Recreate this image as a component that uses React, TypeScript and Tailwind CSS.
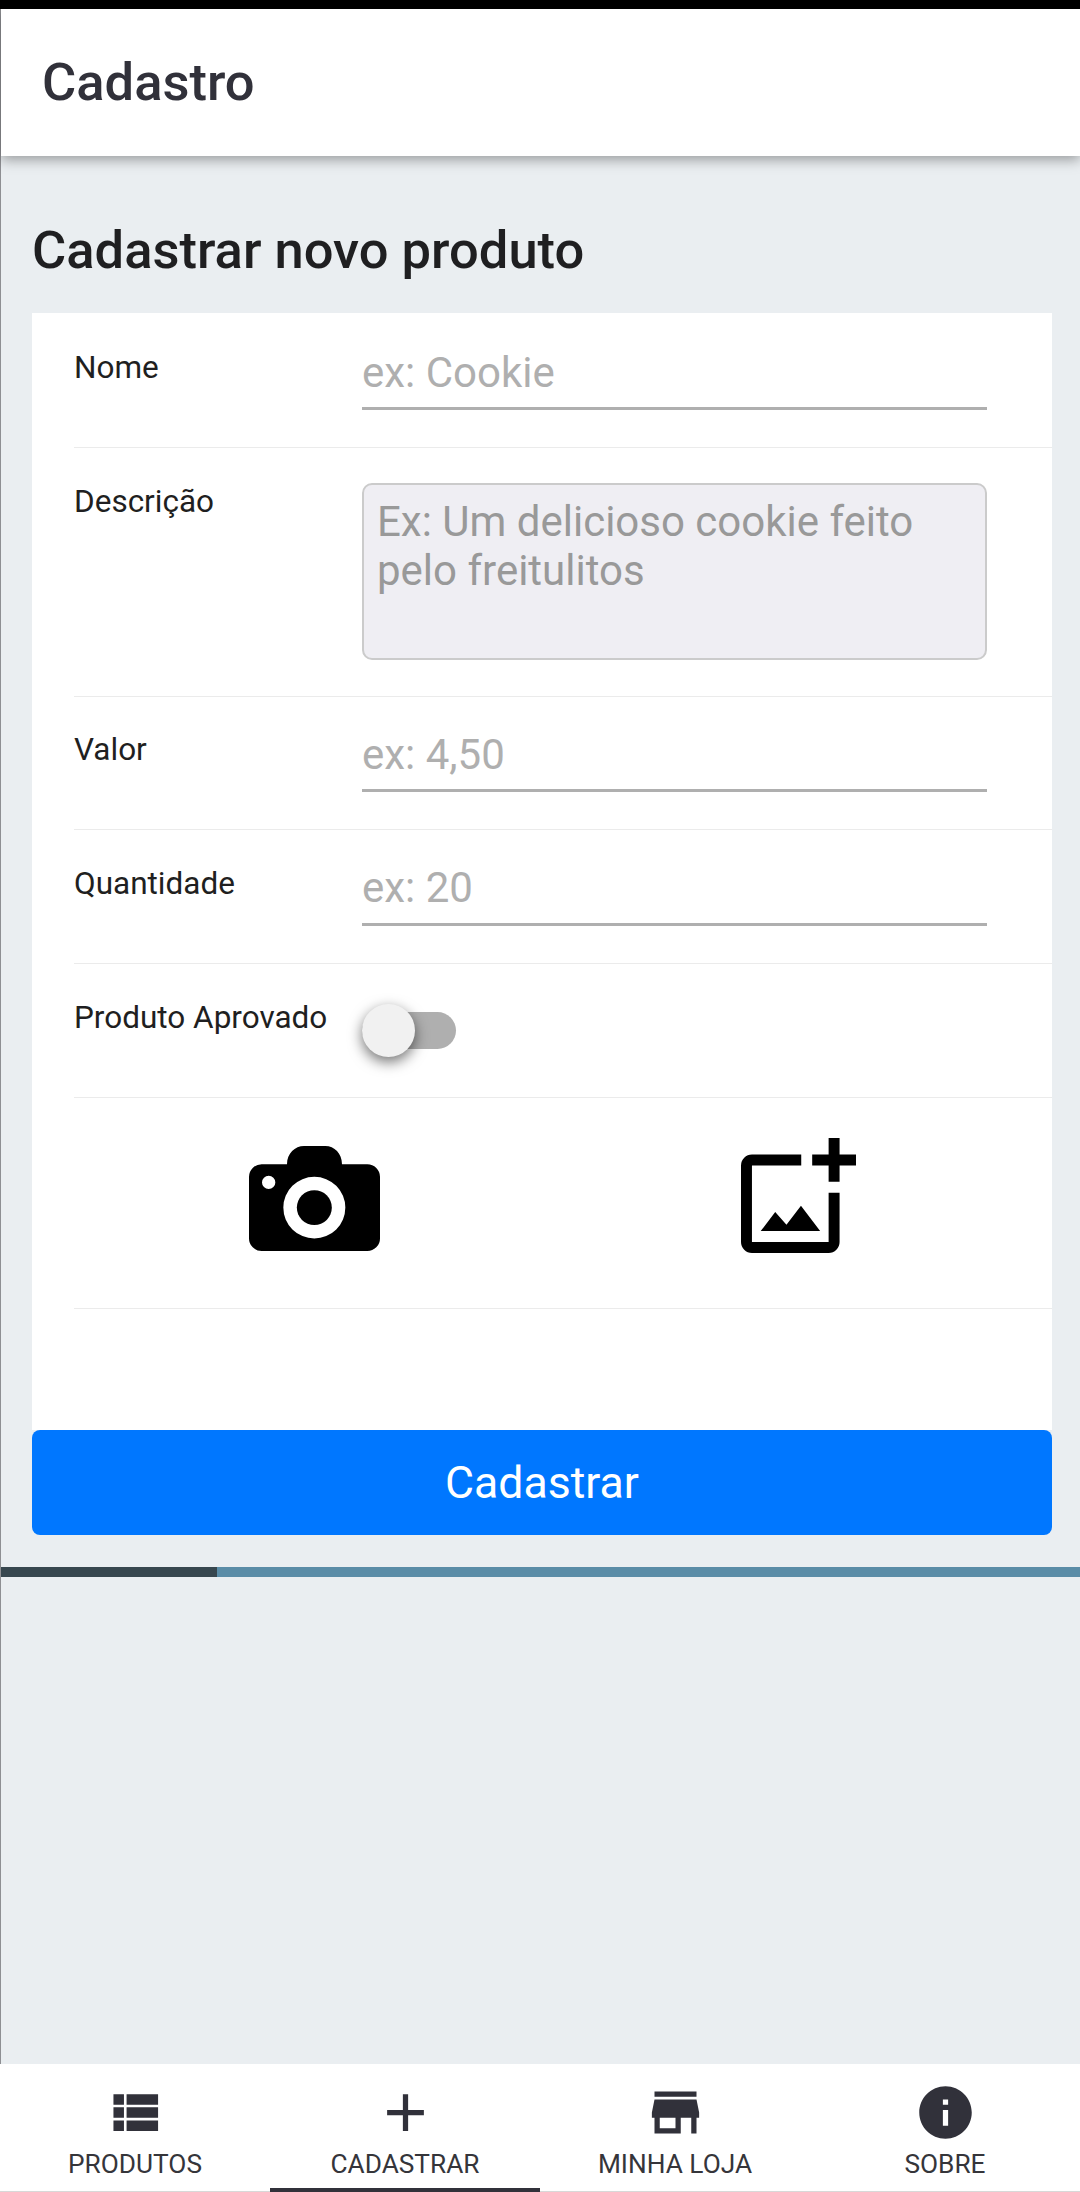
import type { ReactNode } from "react";
import { MdAdd, MdInfo, MdStore } from "react-icons/md";

function Row({ label, className, children }: { label: string; className: string; children: ReactNode }) {
  return (
    <div className={`ml-[42px] flex items-start border-b border-[#ebebeb] ${className}`}>
      <div className="w-[288px] shrink-0 whitespace-nowrap text-[31.5px] leading-[36px] text-[#1f1f21]">{label}</div>
      {children}
    </div>
  );
}

function LineInput({ placeholder, className }: { placeholder: string; className: string }) {
  return (
    <input
      placeholder={placeholder}
      className={`block w-[625px] rounded-none border-b-3 border-[#afafaf] bg-transparent text-[42px] placeholder:text-[#afafaf] placeholder:opacity-100 outline-none ${className}`}
    />
  );
}

function CameraIcon() {
  return (
    <svg width="131" height="105" viewBox="0 0 393 317" preserveAspectRatio="none">
      <path
        fillRule="evenodd"
        d="M38 55H114C114 22 138 0 165 0H229C256 0 279 22 279 55H355A38 38 0 0 1 393 93V279A38 38 0 0 1 355 317H38A38 38 0 0 1 0 279V93A38 38 0 0 1 38 55ZM196 93A93 93 0 1 0 196 279A93 93 0 1 0 196 93ZM59 90A20 20 0 1 0 59 130A20 20 0 1 0 59 90Z"
      />
      <circle cx="196" cy="186" r="52.5" />
    </svg>
  );
}

function AddImageIcon() {
  return (
    <svg width="115" height="115" viewBox="0 0 21 21">
      <path d="M16 10H18V19A2 2 0 0 1 16 21H2A2 2 0 0 1 0 19V5A2 2 0 0 1 2 3H11V5H2V19H16ZM16 0H18V3H21V5H18V8H16V5H13V3H16ZM3.6 17L6.25 13.5L8.3 15.85L10.95 12.35L14.45 17Z" />
    </svg>
  );
}

function ListIcon() {
  return (
    <svg width="63" height="63" viewBox="0.4 0 24 24" fill="currentColor">
      <path d="M4 14h4v-4H4v4zm0 5h4v-4H4v4zM4 9h4V5H4v4zm5 5h12v-4H9v4zm0 5h12v-4H9v4zM9 5v4h12V5H9z" />
    </svg>
  );
}

function Tab({ label, active, children }: { label: string; active?: boolean; children: ReactNode }) {
  return (
    <button
      className={`flex flex-1 flex-col items-center pt-[17px] text-[#31313a] ${
        active ? "border-b-4 border-[#31313a]" : "border-b border-[#d8d8d8]"
      }`}
    >
      {children}
      <span className="text-[26.25px] leading-[40px] text-[#35353a]">{label}</span>
    </button>
  );
}

export default function App() {
  return (
    <div className="flex h-[2192px] w-[1080px] flex-col overflow-hidden bg-[#eaeef1] font-['Roboto',sans-serif]">
      <div className="h-[9px] shrink-0 bg-black" />
      <div className="flex flex-1 flex-col border-l border-[#8e8f93]">
        <header className="flex h-[147px] items-center bg-white pb-[2px] pl-[41px] shadow-[0_4px_12px_rgba(0,0,0,0.34)]">
          <h1 className="text-[52.5px] leading-[62px] font-medium text-[#31313a]">Cadastro</h1>
        </header>
        <main className="flex flex-col pr-[28px] pl-[31px]">
          <h2 className="flex h-[157px] items-center pt-[31px] text-[52.5px] leading-[62px] font-medium text-[#1f1f21]">
            Cadastrar novo produto
          </h2>
          <form className="flex flex-col">
            <div className="h-[1117px] bg-white pt-px">
              <Row label="Nome" className="h-[134px] *:first:mt-[36px]">
                <LineInput placeholder="ex: Cookie" className="mt-[22px] h-[74px] pt-[2px]" />
              </Row>
              <Row label="Descrição" className="h-[249px] *:first:mt-[36px]">
                <textarea
                  placeholder="Ex: Um delicioso cookie feito pelo freitulitos"
                  className="mt-[35px] block h-[177px] w-[625px] resize-none overflow-hidden rounded-[10px] border-2 border-[#cbcbcb] bg-[#efeef3] px-[13px] py-[12px] text-[42px] leading-[49px] placeholder:text-[#999999] placeholder:opacity-100 outline-none"
                />
              </Row>
              <Row label="Valor" className="h-[133px] *:first:mt-[35px]">
                <LineInput placeholder="ex: 4,50" className="mt-[21px] h-[74px] pt-[2px]" />
              </Row>
              <Row label="Quantidade" className="h-[134px] *:first:mt-[36px]">
                <LineInput placeholder="ex: 20" className="mt-[21px] h-[75px] pt-px" />
              </Row>
              <Row label="Produto Aprovado" className="h-[134px] *:first:mt-[36px]">
                <button type="button" className="mt-[48px] flex h-[37px] w-[94px] items-center rounded-full bg-[#afafaf]">
                  <span className="h-[53px] w-[53px] rounded-full bg-[#f1f1f1] shadow-[0_5px_14px_rgba(0,0,0,0.55)]" />
                </button>
              </Row>
              <div className="ml-[42px] flex h-[211px] items-start border-b border-[#ebebeb]">
                <button type="button" className="ml-[175px] pt-[48px]">
                  <CameraIcon />
                </button>
                <button type="button" className="ml-[361px] pt-[40px]">
                  <AddImageIcon />
                </button>
              </div>
            </div>
            <button type="button" className="h-[105px] rounded-[8px] bg-[#0077ff] text-[44.6px] leading-[107px] text-white">
              Cadastrar
            </button>
          </form>
        </main>
        <div className="mt-[32px] flex h-[10px] bg-[#5a8ca7]">
          <div className="w-1/5 bg-[#37474f]" />
        </div>
      </div>
      <nav className="flex h-[128px] shrink-0 bg-white">
        <Tab label="PRODUTOS">
          <ListIcon />
        </Tab>
        <Tab label="CADASTRAR" active>
          <MdAdd size={63} />
        </Tab>
        <Tab label="MINHA LOJA">
          <MdStore size={63} />
        </Tab>
        <Tab label="SOBRE">
          <MdInfo size={63} />
        </Tab>
      </nav>
    </div>
  );
}
